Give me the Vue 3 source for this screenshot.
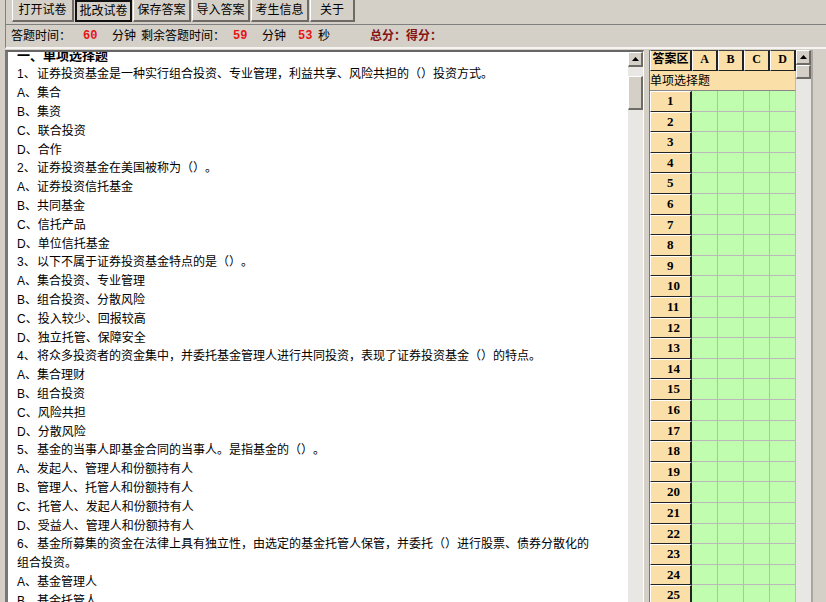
<template>
  <div class="window">
    <div class="frame">
      <div class="toolbar">
        <button
          v-for="item in buttons"
          :key="item"
          type="button"
          class="tool"
          :class="{ active: item === '批改试卷', short: item.length < 4 }"
        >{{ item }}</button>
      </div>
      <div class="status">
        <span>答题时间：</span>
        <b class="num">60</b>
        <span>分钟</span>
        <span class="left-label">剩余答题时间：</span>
        <b class="num left">59</b>
        <span>分钟</span>
        <b class="num sec">53</b>
        <span class="unit">秒</span>
        <b class="score">总分：得分：</b>
      </div>
    </div>

    <div class="main">
      <div class="paper">
        <div class="paper-text">
          <h1>一、单项选择题</h1>
          <section v-for="(q, index) in questions" :key="index" class="question">
            <p><span class="no">{{ index + 1 }}、</span>{{ q.title }}</p>
            <p v-for="(option, i) in q.options" :key="i">
              <span class="no">{{ letters[i] }}、</span>{{ option }}
            </p>
          </section>
        </div>
        <div class="scroll">
          <button type="button" class="arrow" aria-label="向上">
            <svg width="7" height="4" viewBox="0 0 7 4"><path d="M0 4L3.5 0L7 4Z" /></svg>
          </button>
          <div class="thumb"></div>
        </div>
      </div>

      <div class="answers">
        <table>
          <thead>
            <tr>
              <th class="corner">答案区</th>
              <th v-for="letter in letters" :key="letter">{{ letter }}</th>
            </tr>
          </thead>
          <tbody>
            <tr class="category">
              <td colspan="5">单项选择题</td>
            </tr>
            <tr v-for="n in 26" :key="n">
              <th class="row-no">{{ n }}</th>
              <td v-for="letter in letters" :key="letter"></td>
            </tr>
          </tbody>
        </table>
        <div class="scroll">
          <button type="button" class="arrow" aria-label="向上">
            <svg width="7" height="4" viewBox="0 0 7 4"><path d="M0 4L3.5 0L7 4Z" /></svg>
          </button>
          <div class="thumb small"></div>
        </div>
      </div>
    </div>
  </div>
</template>

<script setup>
const buttons = ['打开试卷', '批改试卷', '保存答案', '导入答案', '考生信息', '关于']
const letters = ['A', 'B', 'C', 'D']

const questions = [
  {
    title: '证券投资基金是一种实行组合投资、专业管理，利益共享、风险共担的（）投资方式。',
    options: ['集合', '集资', '联合投资', '合作'],
  },
  {
    title: '证券投资基金在美国被称为（）。',
    options: ['证券投资信托基金', '共同基金', '信托产品', '单位信托基金'],
  },
  {
    title: '以下不属于证券投资基金特点的是（）。',
    options: ['集合投资、专业管理', '组合投资、分散风险', '投入较少、回报较高', '独立托管、保障安全'],
  },
  {
    title: '将众多投资者的资金集中，并委托基金管理人进行共同投资，表现了证券投资基金（）的特点。',
    options: ['集合理财', '组合投资', '风险共担', '分散风险'],
  },
  {
    title: '基金的当事人即基金合同的当事人。是指基金的（）。',
    options: [
      '发起人、管理人和份额持有人',
      '管理人、托管人和份额持有人',
      '托管人、发起人和份额持有人',
      '受益人、管理人和份额持有人',
    ],
  },
  {
    title: '基金所募集的资金在法律上具有独立性，由选定的基金托管人保管，并委托（）进行股票、债券分散化的组合投资。',
    options: ['基金管理人', '基金托管人'],
  },
]
</script>

<style>
body {
  background: #d4d0c8;
}
</style>

<style scoped>
.window {
  display: flex;
  flex-direction: column;
  height: 100vh;
  overflow: hidden;
  box-sizing: border-box;
  padding-left: 5px;
  background: #d4d0c8;
  color: #000;
  font: 12px/19px 'Liberation Sans', 'Noto Sans CJK SC', sans-serif;
  text-spacing-trim: space-all;
}

.frame {
  border-left: 1px solid #808080;
  border-bottom: 2px solid #f6f5f2;
}

.toolbar {
  display: flex;
  gap: 1px;
  padding: 0 6px 2px;
  border-bottom: 1px solid #808080;
}

.tool {
  width: 58px;
  height: 22px;
  padding: 0;
  border: solid;
  border-width: 0 2px 2px 1px;
  border-color: #fff #6e6b66 #6e6b66 #fff;
  background: #d4d0c8;
  color: #000;
  font: inherit;
  white-space: nowrap;
}

.tool.active {
  width: 57px;
  border: 2px solid #111;
}

.tool.short {
  width: 45px;
}

.tool:first-child {
  width: 62px;
}

.status {
  display: flex;
  align-items: center;
  height: 22px;
  padding-left: 5px;
  white-space: nowrap;
}

.num {
  width: 41px;
  box-sizing: border-box;
  padding-left: 12px;
  color: #e81414;
  font: bold 12px/19px 'Liberation Mono', monospace;
}

.num.left {
  width: 37px;
  padding-left: 8px;
}

.num.sec {
  width: 32px;
}

.left-label {
  margin-left: 5px;
}

.unit {
  width: 52px;
}

.score {
  color: #861414;
}

.main {
  display: flex;
  flex: 1;
  min-height: 0;
  padding: 1px 13px 0 0;
}

.paper {
  display: flex;
  flex: 1;
  min-width: 0;
  border: solid;
  border-width: 2px 1px 0 3px;
  border-color: #666 #fff #fff #777;
  margin-right: 5px;
  background: #fff;
}

.paper-text {
  flex: 1;
  min-width: 0;
  overflow: hidden;
  padding: 0 36px 0 9px;
}

/* the sheet is scrolled a few pixels down */
.paper-text h1 {
  margin: -6px 0 0;
  font-size: 13px;
  line-height: 19px;
}

.question {
  margin-bottom: -1px;
}

.question p {
  margin: 0;
}

.no {
  display: inline-block;
  min-width: 20px;
}

.scroll {
  width: 15px;
  background: #e9e7e3;
}

.arrow,
.thumb {
  display: block;
  box-sizing: border-box;
  width: 100%;
  height: 15px;
  padding: 0;
  border: solid;
  border-width: 1px 2px 2px 1px;
  border-color: #fff #6e6b66 #6e6b66 #fff;
  background: #d4d0c8;
}

.arrow svg {
  display: block;
  margin: 0 auto;
}

.thumb {
  height: 34px;
  margin-top: 9px;
}

.thumb.small {
  height: 14px;
  margin-top: 0;
}

.answers {
  display: flex;
  overflow: hidden;
  border-left: 1px solid #777;
  border-right: 2px solid #aaa7a2;
}

table {
  align-self: flex-start;
  width: 146px;
  table-layout: fixed;
  border-collapse: separate;
  border-spacing: 0;
}

th,
td {
  box-sizing: border-box;
  height: 21px;
  padding: 0;
  border: solid #b9b9b9;
  border-width: 0 1px 1px 0;
  background: #c1fdae;
}

th {
  border: solid;
  border-width: 1px 2px 1px 1px;
  border-color: #fff #222 #222 #fff;
  background: #fbdfa8;
  font: bold 12px/17px 'Liberation Serif', 'Noto Sans CJK SC', serif;
  vertical-align: top;
}

thead th {
  border-top-color: #444;
}

.corner {
  width: 42px;
  white-space: nowrap;
}

.category td {
  height: 20px;
  border-bottom-color: #888;
  background: #fbdfa8;
  line-height: 18px;
}

.row-no {
  padding-left: 16px;
  font-size: 13px;
  text-align: left;
}

/* rows alternate between 21px and 20px */
tbody tr:nth-child(5n + 3) > *,
tbody tr:nth-child(5n + 5) > * {
  height: 20px;
}
</style>
